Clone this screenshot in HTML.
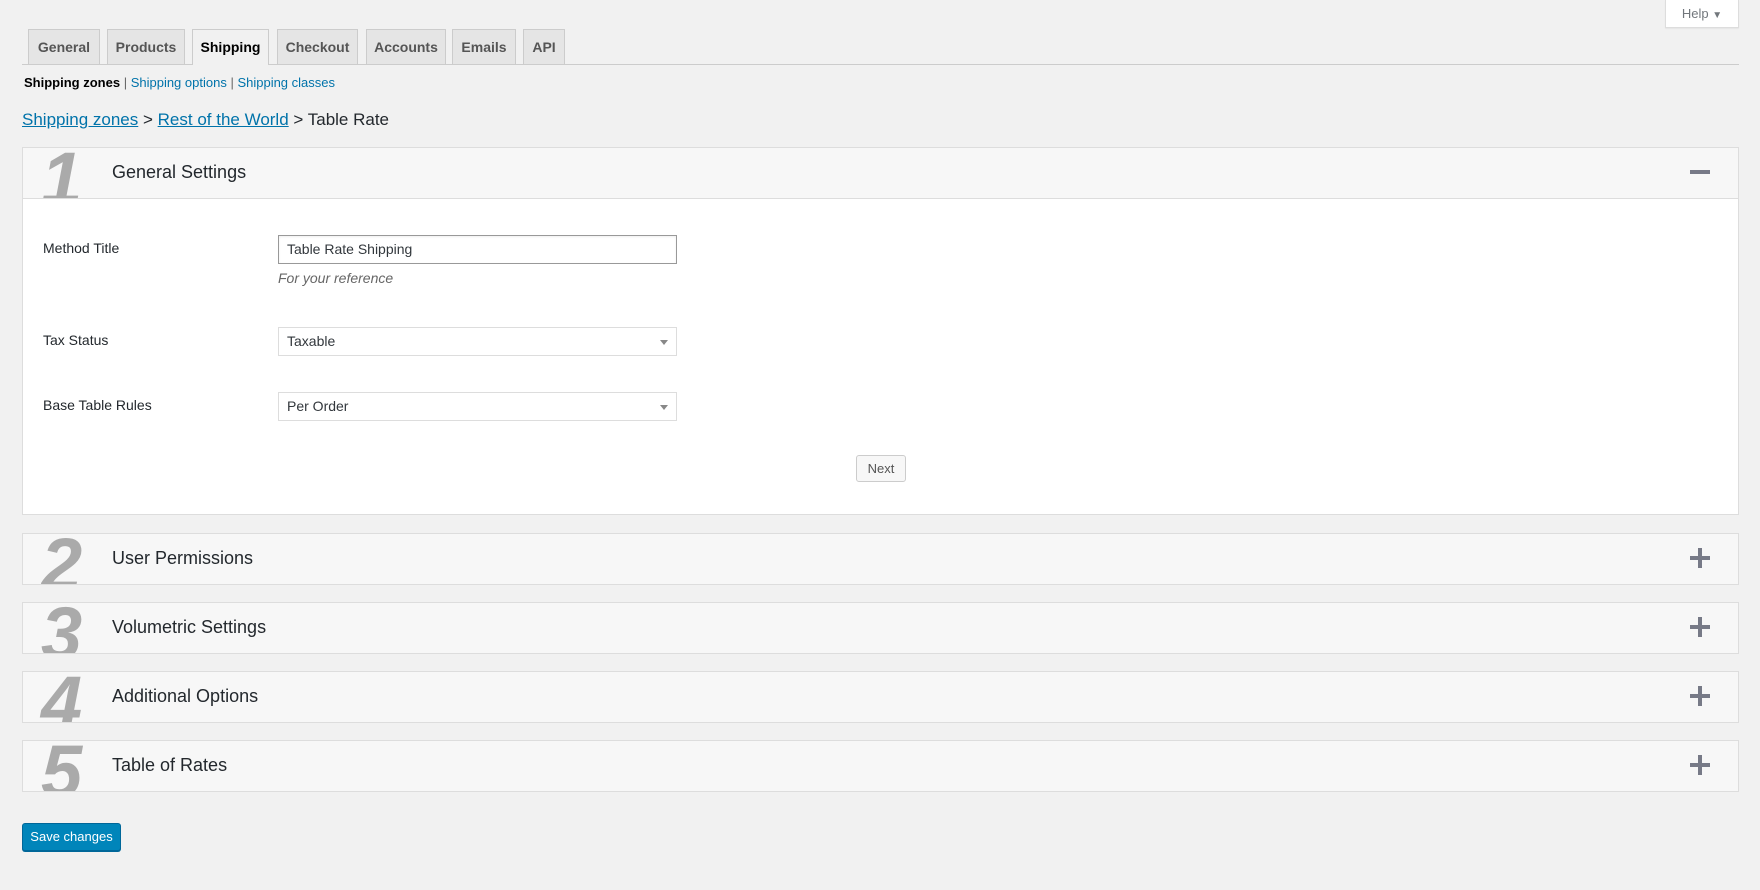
<!DOCTYPE html>
<html><head><meta charset="utf-8"><style>
*{box-sizing:border-box;margin:0;padding:0}
body{width:1760px;height:890px;background:#f1f1f1;font-family:"Liberation Sans",sans-serif;color:#23282d;position:relative;overflow:hidden}
.abs{position:absolute}
.help{left:1665px;top:0;width:74px;height:28px;background:#fff;border:1px solid #ddd;border-top:none;box-shadow:0 1px 1px rgba(0,0,0,.05);font-size:13px;color:#72777c;text-align:center;line-height:28px}
.tabline{left:22px;top:64px;width:1717px;height:1px;background:#ccc}
.tab{top:29px;height:35px;background:#e5e5e5;border:1px solid #ccc;border-bottom:none;font-size:14px;font-weight:bold;color:#555;text-align:center;line-height:34px}
.tab.act{background:#f1f1f1;color:#000;height:36px}
.sub{left:24px;top:75px;font-size:13px;color:#0073aa}
.sub b{color:#000}
.sub span{color:#666}
.bc{left:22px;top:110px;font-size:17px}
.bc a{color:#0073aa;text-decoration:underline}
.panel{left:22px;width:1717px;background:#fff;border:1px solid #ddd;overflow:hidden}
.ph{height:50px;background:#f7f7f7;position:relative;overflow:hidden}
.num{position:absolute;left:18px;top:-6px;font-size:74px;font-style:italic;font-weight:bold;color:#aaa;line-height:74px}
.pt{position:absolute;left:89px;top:14px;font-size:18px;color:#23282d}
.ic{position:absolute;right:28px;top:14px;width:20px;height:20px}
.ic:before{content:"";position:absolute;left:0;top:8px;width:20px;height:4px;background:#777a87}
.ic.plus:after{content:"";position:absolute;left:8px;top:0;width:4px;height:20px;background:#777a87}
.lbl{font-size:14px;color:#23282d;left:43px}
.inp{left:278px;width:399px;height:29px;border:1px solid #ddd;background:#fff;font-size:14px;color:#32373c;padding-left:8px;line-height:27px}
.inp.t{border:1px solid #999;box-shadow:inset 0 1px 2px rgba(0,0,0,.07)}
.inp .ar{position:absolute;right:8px;top:12px;border-left:4px solid transparent;border-right:4px solid transparent;border-top:5px solid #888}
.btn{border:1px solid #ccc;background:#f7f7f7;border-radius:3px;font-size:13px;color:#555;text-align:center}
.save{left:22px;top:823px;width:99px;height:28px;background:#0085ba;border:1px solid #006799;border-radius:3px;color:#fff;font-size:13px;text-align:center;line-height:26px;box-shadow:0 1px 0 #006799}
</style></head><body>
<div class="abs help">Help <span style="font-size:10px">▼</span></div>
<div class="abs tabline"></div>
<div class="abs tab" style="left:28px;width:72px">General</div>
<div class="abs tab" style="left:107px;width:78px">Products</div>
<div class="abs tab act" style="left:192px;width:77px">Shipping</div>
<div class="abs tab" style="left:277px;width:81px">Checkout</div>
<div class="abs tab" style="left:366px;width:80px">Accounts</div>
<div class="abs tab" style="left:452px;width:64px">Emails</div>
<div class="abs tab" style="left:523px;width:42px">API</div>
<div class="abs sub"><b>Shipping zones</b> <span>|</span> Shipping options <span>|</span> Shipping classes</div>
<div class="abs bc"><a>Shipping zones</a> &gt; <a>Rest of the World</a> &gt; Table Rate</div>

<div class="abs panel" style="top:147px;height:368px">
<div class="ph" style="border-bottom:1px solid #ddd;height:51px"><div class="num">1</div><div class="pt">General Settings</div><div class="ic"></div></div>
</div>
<div class="abs lbl" style="top:240px">Method Title</div>
<div class="abs inp t" style="top:235px">Table Rate Shipping</div>
<div class="abs" style="left:278px;top:270px;font-size:14px;font-style:italic;color:#666">For your reference</div>
<div class="abs lbl" style="top:332px">Tax Status</div>
<div class="abs inp" style="top:327px">Taxable<span class="ar"></span></div>
<div class="abs lbl" style="top:397px">Base Table Rules</div>
<div class="abs inp" style="top:392px">Per Order<span class="ar"></span></div>
<div class="abs btn" style="left:856px;top:455px;width:50px;height:27px;line-height:25px">Next</div>

<div class="abs panel" style="top:533px;height:52px"><div class="ph"><div class="num">2</div><div class="pt">User Permissions</div><div class="ic plus"></div></div></div>
<div class="abs panel" style="top:602px;height:52px"><div class="ph"><div class="num">3</div><div class="pt">Volumetric Settings</div><div class="ic plus"></div></div></div>
<div class="abs panel" style="top:671px;height:52px"><div class="ph"><div class="num">4</div><div class="pt">Additional Options</div><div class="ic plus"></div></div></div>
<div class="abs panel" style="top:740px;height:52px"><div class="ph"><div class="num">5</div><div class="pt">Table of Rates</div><div class="ic plus"></div></div></div>

<div class="abs save">Save changes</div>
</body></html>
